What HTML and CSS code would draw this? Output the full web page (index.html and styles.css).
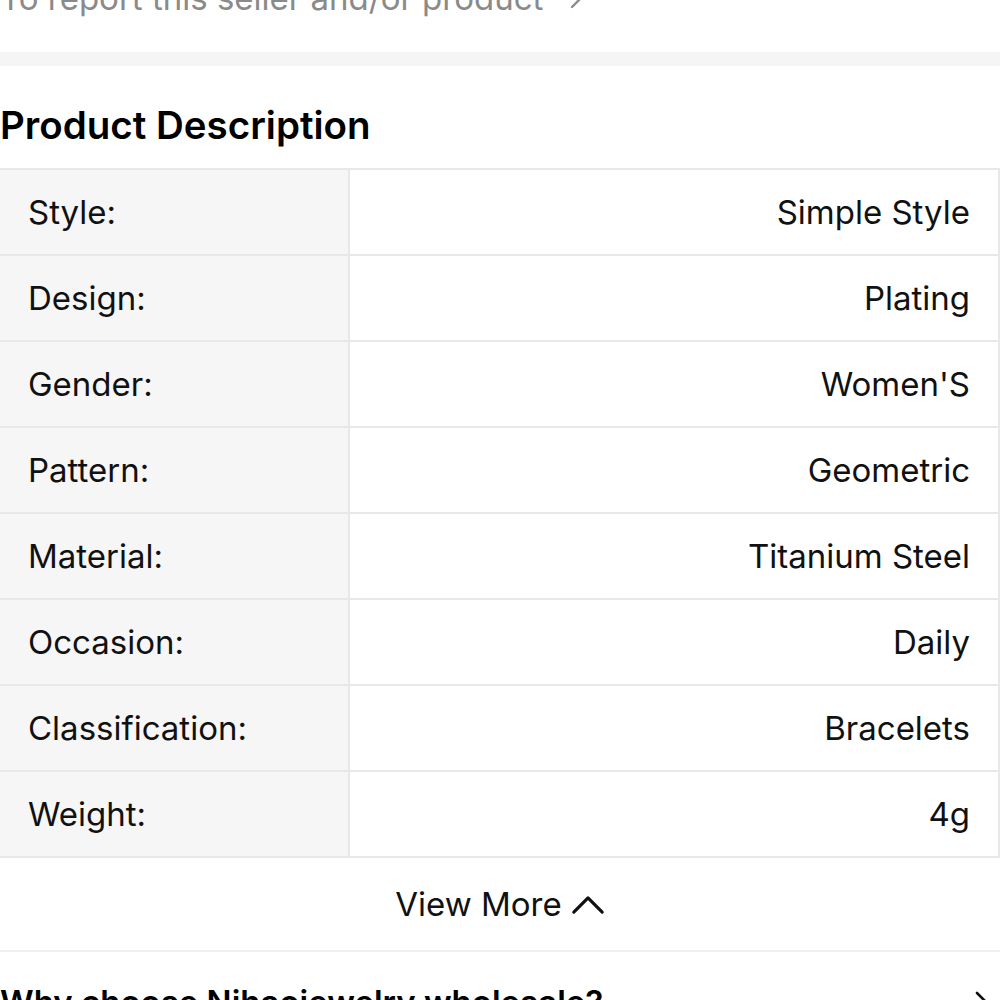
FILE: index.html
```html
<!DOCTYPE html>
<html lang="en">
<head>
    <meta charset="UTF-8">
    <meta name="viewport" content="width=device-width, initial-scale=1.0">
    <title>Product Description</title>
    <link rel="stylesheet" href="styles.css">
</head>
<body>
    <div class="report">
        <a class="report-link" href="#">To report this seller and/or product
            <svg class="report-arrow" viewBox="0 0 16 24" width="16" height="24"><path d="M3 3 L12 12 L3 21" fill="none" stroke="#8a8a8a" stroke-width="2.4" stroke-linecap="round" stroke-linejoin="round"/></svg>
        </a>
    </div>
    <div class="divider-band"></div>

    <section class="description">
        <h2 class="section-title">Product Description</h2>
        <div class="spec-table">
            <div class="spec-label">Style:</div><div class="spec-value">Simple Style</div>
            <div class="spec-label">Design:</div><div class="spec-value">Plating</div>
            <div class="spec-label">Gender:</div><div class="spec-value">Women'S</div>
            <div class="spec-label">Pattern:</div><div class="spec-value">Geometric</div>
            <div class="spec-label">Material:</div><div class="spec-value">Titanium Steel</div>
            <div class="spec-label">Occasion:</div><div class="spec-value">Daily</div>
            <div class="spec-label">Classification:</div><div class="spec-value">Bracelets</div>
            <div class="spec-label">Weight:</div><div class="spec-value">4g</div>
        </div>
        <button class="view-more" type="button">View More
            <svg class="view-more-icon" viewBox="0 0 36 24" width="34" height="23"><path d="M3 20 L18 5 L33 20" fill="none" stroke="#111" stroke-width="3.4" stroke-linecap="round" stroke-linejoin="round"/></svg>
        </button>
    </section>

    <a class="why-row" href="#">
        <span class="why-title">Why choose Nihaojewelry wholesale?</span>
        <svg class="why-arrow" viewBox="0 0 16 24" width="16" height="24"><path d="M3 3 L12 12 L3 21" fill="none" stroke="#111" stroke-width="2.6" stroke-linecap="round" stroke-linejoin="round"/></svg>
    </a>
</body>
</html>
```

FILE: styles.css
```css
* {
    margin: 0;
    padding: 0;
    box-sizing: border-box;
    font-family: Inter, 'Noto Sans', sans-serif;
}

body {
    background: #fff;
    width: 1000px;
    height: 1000px;
    overflow: hidden;
    color: #111;
}

.report {
    height: 52px;
    overflow: hidden;
}

.report-link {
    display: flex;
    align-items: center;
    gap: 26px;
    margin-top: -24px;
    height: 44px;
    color: #8a8a8a;
    font-size: 33px;
    text-decoration: none;
}

.divider-band {
    height: 14px;
    background: #f5f5f5;
}

.section-title {
    font-size: 38.5px;
    font-weight: 600;
    color: #000;
    padding-top: 37px;
    height: 102px;
    line-height: 44px;
}

.spec-table {
    display: grid;
    grid-template-columns: 348px 1fr;
    gap: 2px;
    padding: 2px 2px 2px 0;
    background: #e8e8e8;
}

.spec-label,
.spec-value {
    height: 84px;
    display: flex;
    align-items: center;
    font-size: 33px;
    color: #111;
}

.spec-label {
    background: #f6f6f6;
    padding-left: 28px;
}

.spec-value {
    background: #fff;
    justify-content: flex-end;
    padding-right: 28px;
}

.view-more {
    width: 100%;
    height: 94px;
    display: flex;
    align-items: center;
    justify-content: center;
    gap: 9px;
    background: none;
    border: none;
    border-bottom: 2px solid #f0f0f0;
    font-size: 33px;
    color: #111;
    cursor: pointer;
}

.why-row {
    display: flex;
    align-items: center;
    justify-content: space-between;
    padding: 30px 10px 0 0;
    text-decoration: none;
}

.why-title {
    font-size: 33px;
    font-weight: 600;
    color: #000;
}
```
